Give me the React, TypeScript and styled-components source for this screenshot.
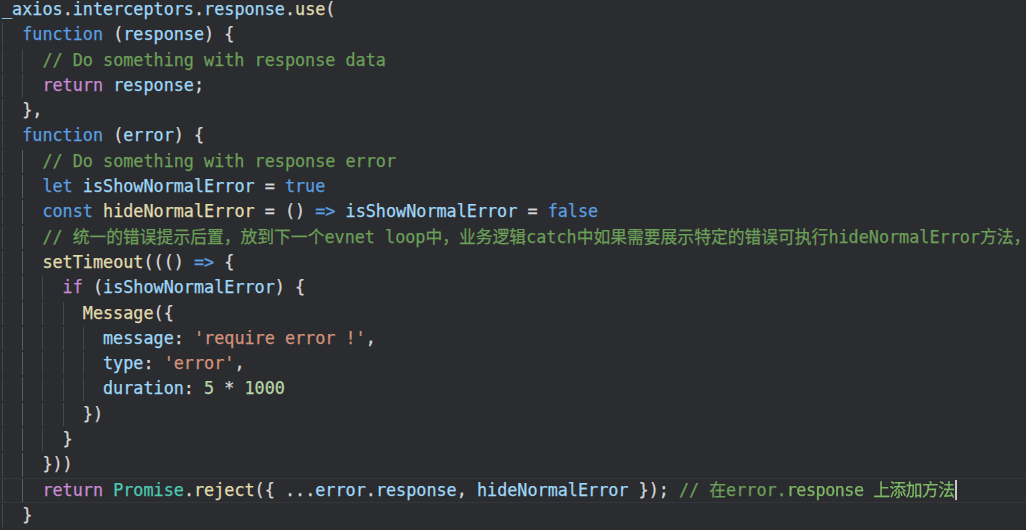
import React from "react";
import styled, { createGlobalStyle } from "styled-components";

const Global = createGlobalStyle`
  html, body {
    margin: 0;
    padding: 0;
    background: #2b2c30;
    overflow: hidden;
  }
`;

const Editor = styled.div`
  width: 1026px;
  height: 530px;
  overflow: hidden;
  background: #2b2c30;
  font-family: "DejaVu Sans Mono", "Noto Sans CJK SC", monospace;
  font-size: 16.8px;
  color: #d4d4d4;
  box-sizing: border-box;
  padding-left: 2px;
  -webkit-text-stroke: 0.25px currentColor;
`;

const Lines = styled.div`
  display: flex;
  flex-direction: column;
  margin-top: -3px;
`;

const Line = styled.div<{ $active?: boolean }>`
  display: flex;
  align-items: stretch;
  flex: none;
  height: 25.3px;
  line-height: 23.3px;
  white-space: pre;
  box-sizing: border-box;
  margin-left: -2px;
  padding-left: 2px;
  border-top: 1px solid ${(p) => (p.$active ? "#36373b" : "transparent")};
  border-bottom: 1px solid ${(p) => (p.$active ? "#36373b" : "transparent")};
`;

const Indent = styled.span<{ $bright?: boolean }>`
  flex: none;
  width: 2ch;
  box-sizing: border-box;
  border-left: 1px solid ${(p) => (p.$bright ? "#5c5d62" : "#46474b")};
`;

const Code = styled.span`
  flex: none;
`;

const colors: Record<string, string> = {
  p: "#d8d8d8",
  k: "#5a9ee0",
  c: "#c88ad0",
  v: "#9fd8f8",
  f: "#e0dcae",
  m: "#6c9f58",
  s: "#d4927a",
  n: "#b8d4a8",
  t: "#4ec9b0",
};

const Tok = styled.span<{ $k: string }>`
  color: ${(p) => colors[p.$k] || "#d4d4d4"};
`;

const Smudge = styled.span`
  color: #7fb865;
  filter: blur(0.7px);
  letter-spacing: -0.5px;
`;

const Cursor = styled.span`
  display: inline-block;
  width: 2px;
  height: 20px;
  background: #c8c8c8;
  vertical-align: -4px;
`;

type T = [string, string];
type L = { level: number; toks: T[]; active?: boolean; tail?: boolean };

const lines: L[] = [
  { level: 0, toks: [["_axios", "v"], [".", "p"], ["interceptors", "v"], [".", "p"], ["response", "v"], [".", "p"], ["use", "f"], ["(", "p"]] },
  { level: 1, toks: [["function", "k"], [" (", "p"], ["response", "v"], [") {", "p"]] },
  { level: 2, toks: [["// Do something with response data", "m"]] },
  { level: 2, toks: [["return", "c"], [" ", "p"], ["response", "v"], [";", "p"]] },
  { level: 1, toks: [["},", "p"]] },
  { level: 1, toks: [["function", "k"], [" (", "p"], ["error", "v"], [") {", "p"]] },
  { level: 2, toks: [["// Do something with response error", "m"]] },
  { level: 2, toks: [["let", "k"], [" ", "p"], ["isShowNormalError", "v"], [" = ", "p"], ["true", "k"]] },
  { level: 2, toks: [["const", "k"], [" ", "p"], ["hideNormalError", "f"], [" = () ", "p"], ["=>", "k"], [" ", "p"], ["isShowNormalError", "v"], [" = ", "p"], ["false", "k"]] },
  { level: 2, toks: [["// 统一的错误提示后置，放到下一个evnet loop中，业务逻辑catch中如果需要展示特定的错误可执行hideNormalError方法，", "m"]] },
  { level: 2, toks: [["setTimeout", "f"], ["((() ", "p"], ["=>", "k"], [" {", "p"]] },
  { level: 3, toks: [["if", "c"], [" (", "p"], ["isShowNormalError", "v"], [") {", "p"]] },
  { level: 4, toks: [["Message", "f"], ["({", "p"]] },
  { level: 5, toks: [["message", "v"], [": ", "p"], ["'require error !'", "s"], [",", "p"]] },
  { level: 5, toks: [["type", "v"], [": ", "p"], ["'error'", "s"], [",", "p"]] },
  { level: 5, toks: [["duration", "v"], [": ", "p"], ["5", "n"], [" * ", "p"], ["1000", "n"]] },
  { level: 4, toks: [["})", "p"]] },
  { level: 3, toks: [["}", "p"]] },
  { level: 2, toks: [["}))", "p"]] },
  {
    level: 2,
    active: true,
    tail: true,
    toks: [["return", "c"], [" ", "p"], ["Promise", "t"], [".", "p"], ["reject", "f"], ["({ ...", "p"], ["error", "v"], [".", "p"], ["response", "v"], [", ", "p"], ["hideNormalError", "v"], [" }); ", "p"], ["// 在error.", "m"]],
  },
  { level: 1, toks: [["}", "p"]] },
];

export default function App() {
  return (
    <>
      <Global />
      <Editor>
        <Lines>
          {lines.map((l, i) => (
            <Line key={i} $active={l.active}>
              {Array.from({ length: l.level }).map((_, j) => (
                <Indent key={j} $bright={j === 1 && i >= 6 && i <= 19} />
              ))}
              <Code>
                {l.toks.map(([text, k], j) => (
                  <Tok key={j} $k={k}>
                    {text}
                  </Tok>
                ))}
                {l.tail && (
                  <>
                    <Smudge>response 上添加方法</Smudge>
                    <Cursor />
                  </>
                )}
              </Code>
            </Line>
          ))}
        </Lines>
      </Editor>
    </>
  );
}
